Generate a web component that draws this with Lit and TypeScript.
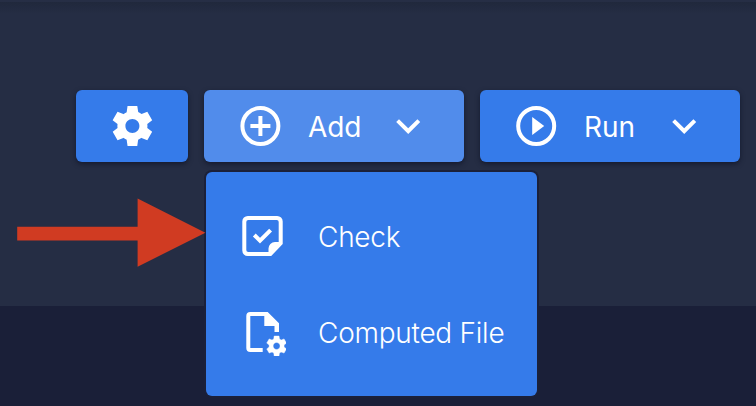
import { LitElement, html, svg, css } from "lit";
import { customElement, property } from "lit/decorators.js";
import { classMap } from "lit/directives/class-map.js";

const COG =
  "M19.44 12.99l-.01.02c.04-.33.08-.67.08-1.01 0-.34-.03-.66-.07-.99l.01.02 2.44-1.92-2.43-4.22-2.87 1.16.01.01c-.52-.4-1.09-.74-1.71-1h.01L14.44 2H9.57l-.44 3.07h.01c-.62.26-1.19.6-1.71 1l.01-.01-2.88-1.17-2.44 4.22 2.44 1.92.01-.02c-.04.33-.07.65-.07.99 0 .34.03.68.08 1.01l-.01-.02-2.1 1.65-.33.26 2.43 4.2 2.88-1.15-.02-.04c.53.41 1.1.75 1.73 1.01h-.03L9.58 22h4.85l.44-3.07h-.01c.62-.26 1.2-.6 1.73-1.01l-.02.04 2.88 1.15 2.43-4.2-2.44-1.92zM12 15.5c-1.93 0-3.5-1.57-3.5-3.5s1.57-3.5 3.5-3.5 3.5 1.57 3.5 3.5-1.57 3.5-3.5 3.5z";

const ICONS = {
  cog: svg`<path transform="translate(.4) scale(2)" d=${COG} />`,
  add: svg`<g transform="translate(.4)"><circle cx="24" cy="24" r="18" fill="none" stroke="currentColor" stroke-width="4" />
    <path d="M22 14h4v8h8v4h-8v8h-4v-8h-8v-4h8z" /></g>`,
  run: svg`<g transform="translate(.2)"><circle cx="24" cy="24" r="18" fill="none" stroke="currentColor" stroke-width="4" />
    <path d="M20 15v18l12-9z" /></g>`,
  chevron: svg`<path transform="translate(.2)" d="M14.8 17.2L24 26.3l9.2-9.1L36 20 24 32 12 20z" />`,
  check: svg`<path fill-rule="evenodd" d="M9.8 4h29.4a5.5 5.5 0 0 1 5.5 5.5V32L33.2 44H9.8a5.5 5.5 0 0 1-5.5-5.5v-29A5.5 5.5 0 0 1 9.8 4zM10.3 8a2 2 0 0 0-2 2v28a2 2 0 0 0 2 2h20.2v-3.5a6.5 6.5 0 0 1 6.5-6.5h3.7V10a2 2 0 0 0-2-2z" />
    <path d="M16.3 23l5.7 5.7 10.6-10.6" fill="none" stroke="currentColor" stroke-width="4" />`,
  file: svg`<path d="M12.3 4h17.4L41 15.3V24h-4.5v-6H26.3V8h-14v32h12.4v4H12.3a4 4 0 0 1-4-4V8a4 4 0 0 1 4-4z" />
    <path transform="translate(26.6 26)" stroke="currentColor" stroke-width=".4" stroke-linejoin="round" d=${COG} />`,
};
type IconName = keyof typeof ICONS;

@customElement("ui-icon")
class UiIcon extends LitElement {
  @property() name: IconName = "cog";
  static styles = css`
    :host { display: block; flex: none; width: 48px; height: 48px; color: #fff; }
    .glyph { display: block; width: 100%; height: 100%; fill: currentColor; }
  `;
  render() {
    return html`<svg class="glyph" viewBox="0 0 48 48">${ICONS[this.name]}</svg>`;
  }
}

@customElement("tool-button")
class ToolButton extends LitElement {
  @property() icon: IconName = "cog";
  @property() label = "";
  @property({ type: Boolean }) active = false;
  static styles = css`
    :host { display: block; }
    .button {
      display: flex; align-items: center; height: 72px; padding: 0 32px; border: 0;
      border-radius: 6px; background: #357bea; color: #fff;
      font: 370 28px "Inter", sans-serif; letter-spacing: -0.1px;
      box-shadow: 0 2px 5px rgba(10, 14, 32, 0.6);
    }
    .wide { width: 260px; }
    .active { background: #518ceb; }
    .label { flex: 1; padding: 2px 0 0 24px; text-align: left; }
  `;
  render() {
    return html`<button class=${classMap({ button: true, wide: !!this.label, active: this.active })}>
      <ui-icon .name=${this.icon}></ui-icon>
      ${this.label
        ? html`<span class="label">${this.label}</span><ui-icon name="chevron"></ui-icon>`
        : null}
    </button>`;
  }
}

@customElement("app-root")
class AppRoot extends LitElement {
  static styles = css`
    :host { display: block; height: 406px; overflow: hidden; background: #1a1f38; }
    .header {
      position: relative; box-sizing: border-box; height: 306px; padding: 90px 16px 0;
      background: linear-gradient(#262e45 0 2px, #20283c 2px, #252d44 14px);
    }
    .toolbar { display: flex; justify-content: flex-end; gap: 16px; }
    .group { position: relative; }
    .menu {
      position: absolute; top: 82px; left: 2px; box-sizing: border-box; width: 331px; height: 224px;
      margin: 0; padding: 16px 0; list-style: none; border-radius: 6px; background: #357bea;
      box-shadow: 0 0 0 2px #1b2039;
    }
    .item {
      display: flex; align-items: center; gap: 32px; height: 96px; padding: 0 32px;
      box-sizing: border-box; color: #fff; font: 300 28px "Inter", sans-serif;
      white-space: nowrap;
    }
    .text { padding-top: 2px; letter-spacing: -0.25px; }
    .arrow { position: absolute; left: 16px; top: 198px; width: 190px; height: 69px; fill: #d03b22; }
  `;
  render() {
    return html`
      <section class="header">
        <div class="toolbar">
          <tool-button icon="cog"></tool-button>
          <div class="group">
            <tool-button icon="add" label="Add" active></tool-button>
            <ul class="menu">
              <li class="item"><ui-icon name="check"></ui-icon><span class="text">Check</span></li>
              <li class="item"><ui-icon name="file"></ui-icon><span class="text">Computed File</span></li>
            </ul>
          </div>
          <tool-button icon="run" label="Run"></tool-button>
        </div>
        <svg class="arrow" viewBox="0 0 190 69">
          <path d="M1.2 28.7h120.4V.6l67.8 34.2-67.8 33.9V42.6H1.2z" />
        </svg>
      </section>
    `;
  }
}
